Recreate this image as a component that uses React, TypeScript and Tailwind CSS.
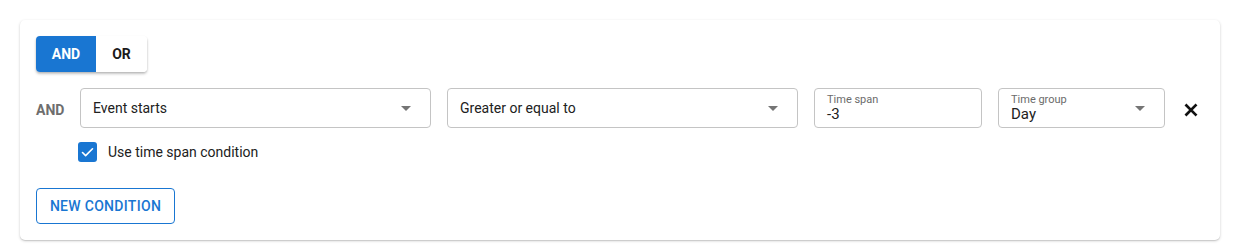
import { Check } from "lucide-react"

const FONT = { fontFamily: "Roboto, 'Liberation Sans', sans-serif" }

function Caret() {
  return (
    <svg viewBox="0 0 24 24" className="w-6 h-6 fill-[#757575]">
      <path d="M7 10l5 5 5-5z" />
    </svg>
  )
}

function SelectBox({ value, width }: { value: string; width: string }) {
  return (
    <div className={`${width} h-10 shrink-0 flex items-center justify-between rounded-[4px] border border-[#c4c4c4] pl-3 pr-3 text-sm text-[#212121]`}>
      <span className="-mt-px">{value}</span>
      <Caret />
    </div>
  )
}

function LabeledField({ label, value, width, caret }: { label: string; value: string; width: string; caret?: boolean }) {
  return (
    <div className={`${width} h-10 shrink-0 flex items-center justify-between rounded-[4px] border border-[#c4c4c4] pl-3 pr-3`}>
      <div className="flex flex-col leading-none">
        <span className="text-[11px] text-[#6b6b6b] leading-[13px]">{label}</span>
        <span className="text-[15px] text-[#212121] leading-[17px]">{value}</span>
      </div>
      {caret && <Caret />}
    </div>
  )
}

export default function App() {
  return (
    <div className="bg-white w-[1236px] h-[252px] pt-5 px-5" style={FONT}>
      <div className="w-[1200px] h-[220px] rounded-[5px] bg-white p-4 shadow-[0_1px_3px_rgba(0,0,0,0.18),0_1px_1px_rgba(0,0,0,0.1)]">
        {/* AND / OR toggle */}
        <div className="inline-flex h-9 rounded-[4px] overflow-hidden shadow-[0_2px_3px_rgba(0,0,0,0.2),0_1px_2px_rgba(0,0,0,0.12)]">
          <button className="w-[60px] bg-[#1976d2] text-white text-sm font-bold">AND</button>
          <button className="w-[51px] bg-white text-[#1a1a1a] text-sm font-bold">OR</button>
        </div>

        {/* Condition row */}
        <div className="mt-4 flex items-center gap-4">
          <span className="w-[28px] text-sm font-bold text-[#6e6e6e] pt-1">AND</span>
          <SelectBox value="Event starts" width="w-[351px]" />
          <SelectBox value="Greater or equal to" width="w-[351px]" />
          <LabeledField label="Time span" value="-3" width="w-[168px]" />
          <LabeledField label="Time group" value="Day" width="w-[167px]" caret />
          <svg viewBox="0 0 24 24" className="w-5 h-5 shrink-0 mt-[3px] stroke-[#111]" strokeWidth={3.2} strokeLinecap="square">
            <path d="M6.5 6.5l11 11M17.5 6.5l-11 11" fill="none" />
          </svg>
        </div>

        {/* Checkbox */}
        <div className="mt-3 h-6 flex items-center pl-[42px] gap-[11px]">
          <span className="w-[19px] h-[20px] rounded-[3px] bg-[#1976d2] flex items-center justify-center">
            <Check className="w-[15px] h-[15px] text-white" strokeWidth={2.6} />
          </span>
          <span className="text-sm text-[#212121]">Use time span condition</span>
        </div>

        {/* New condition */}
        <button className="mt-6 h-9 w-[139px] rounded-[4px] border border-[#1976d2] text-sm font-medium tracking-[0.3px] text-[#1976d2]">
          NEW CONDITION
        </button>
      </div>
    </div>
  )
}
